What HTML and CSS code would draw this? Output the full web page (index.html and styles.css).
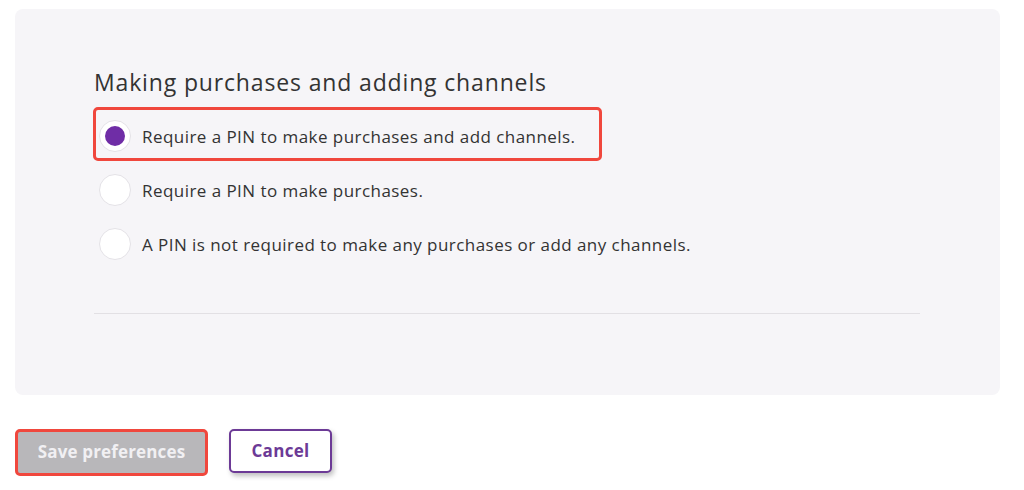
FILE: index.html
```html
<!DOCTYPE html>
<html>
<head>
<meta charset="utf-8">
<link rel="stylesheet" href="styles.css">
</head>
<body>
<div class="page">
  <section class="panel">
    <h2 class="title">Making purchases and adding channels</h2>
    <div class="options">
      <label class="option highlight">
        <span class="radio checked"></span>
        <span class="label">Require a PIN to make purchases and add channels.</span>
      </label>
      <label class="option">
        <span class="radio"></span>
        <span class="label">Require a PIN to make purchases.</span>
      </label>
      <label class="option">
        <span class="radio"></span>
        <span class="label">A PIN is not required to make any purchases or add any channels.</span>
      </label>
    </div>
    <hr class="divider">
  </section>
  <div class="actions">
    <button class="btn btn-save">Save preferences</button>
    <button class="btn btn-cancel">Cancel</button>
  </div>
</div>
</body>
</html>
```
FILE: styles.css
```css
* { box-sizing: border-box; }
html, body { margin: 0; padding: 0; background: #ffffff; }
body {
  font-family: "Open Sans", "Liberation Sans", sans-serif;
  color: #333333;
  width: 1024px;
  height: 490px;
  overflow: hidden;
}
.page { padding: 9px 24px 0 15px; }
.panel {
  background: #f6f5f8;
  border-radius: 8px;
  height: 386px;
  padding: 58px 80px 0 79px;
}
.title {
  margin: 0;
  font-size: 23px;
  font-weight: 400;
  letter-spacing: 0.85px;
  line-height: 30px;
  color: #333;
}
.options {
  margin: 10px 0 0 -1px;
  display: flex;
  flex-direction: column;
  align-items: flex-start;
}
.option {
  display: flex;
  align-items: center;
  gap: 11px;
  height: 54px;
  padding: 4px 23px 0 3px;
  border: 3px solid transparent;
  border-radius: 5px;
  font-size: 17px;
  letter-spacing: 0.45px;
}
.option.highlight { border-color: #f0473d; }
.radio {
  width: 32px;
  height: 32px;
  border-radius: 50%;
  background: #fff;
  border: 1px solid #e4e2e7;
  display: flex;
  align-items: center;
  justify-content: center;
  flex: none;
}
.radio.checked::after {
  content: "";
  width: 20px;
  height: 20px;
  border-radius: 50%;
  background: #6f2da6;
}
.divider {
  margin: 44px 0 0 0;
  border: 0;
  border-top: 1px solid #e2e0e4;
  width: 826px;
}
.actions {
  display: flex;
  align-items: flex-start;
  gap: 21px;
  margin-top: 34px;
}
.btn {
  font-family: "Open Sans", "Liberation Sans", sans-serif;
  font-weight: 700;
  font-size: 17px;
  border-radius: 5px;
  cursor: pointer;
  padding: 0 0 2px;
}
.btn-save {
  width: 193px;
  height: 47px;
  background: #b8b7ba;
  color: #f1f0f3;
  border: 3px solid #f0473d;
  letter-spacing: 0.15px;
}
.btn-cancel {
  width: 103px;
  height: 44px;
  background: #fff;
  color: #6c3a96;
  border: 2px solid #6c3a96;
  box-shadow: 2px 3px 5px rgba(0,0,0,0.25);
  letter-spacing: 0.3px;
}
```
